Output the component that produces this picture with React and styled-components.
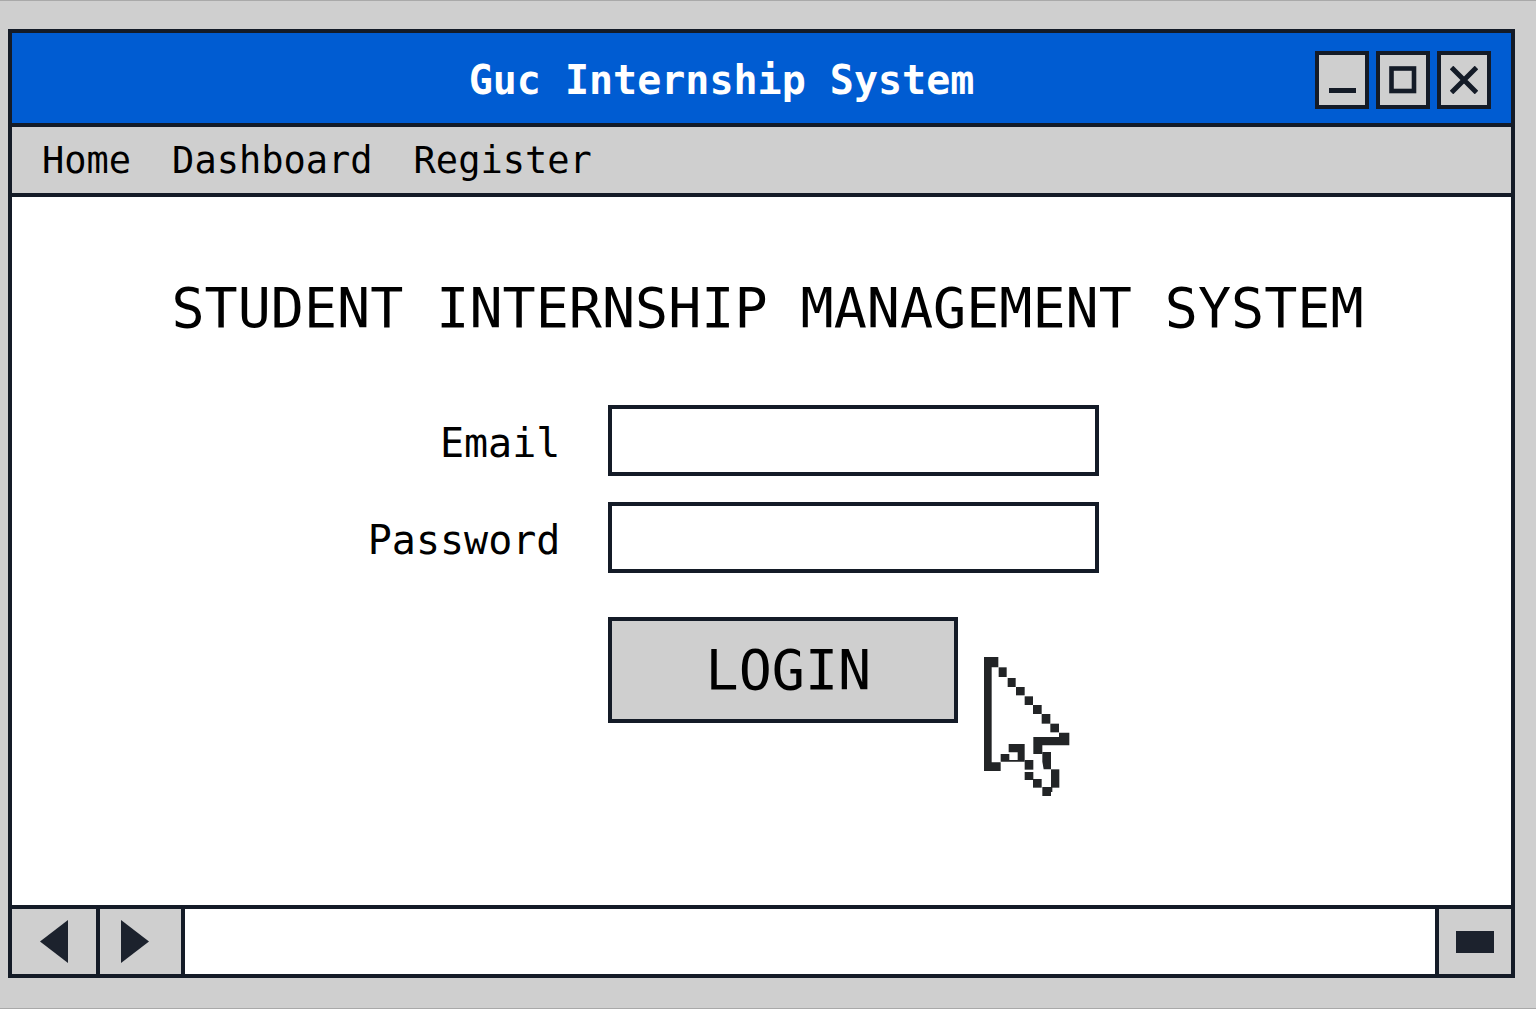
import React from "react";
import styled, { createGlobalStyle } from "styled-components";

const ink = "#141b27";
const grey = "#cfcfcf";
const blue = "#005cd2";

const GlobalStyle = createGlobalStyle`
  *, *::before, *::after { box-sizing: border-box; }
  body {
    margin: 0;
    background: #fff;
    color: #000;
    font-family: "DejaVu Sans Mono", "Liberation Mono", monospace;
  }
  button, input { font: inherit; color: inherit; margin: 0; border-radius: 0; }
`;

const Desktop = styled.div`
  display: flex;
  flex-direction: column;
  min-height: calc(100vh - 15px);
  padding: 28px 21px 30px 8px;
  background: ${grey};
  border-top: 1px solid #a9a9a9;
  border-bottom: 1px solid #a9a9a9;
`;

const Window = styled.div`
  flex: 1;
  display: flex;
  flex-direction: column;
  border: 4px solid ${ink};
  background: #fff;
`;

const TitleBar = styled.header`
  display: flex;
  align-items: center;
  padding: 18px 20px 14px 116px;
  background: ${blue};
  border-bottom: 4px solid ${ink};
`;

const Title = styled.div`
  flex: 1;
  color: #fff;
  font-size: 40px;
  font-weight: 700;
  line-height: 48px;
  text-align: center;
`;

const Controls = styled.div`
  display: flex;
  gap: 7px;
`;

const ControlButton = styled.button`
  display: grid;
  place-items: center;
  width: 54px;
  height: 58px;
  padding: 0;
  background: ${grey};
  border: 4px solid ${ink};
`;

const Menu = styled.nav`
  display: flex;
  gap: 41px;
  padding: 10px 30px 8px;
  background: ${grey};
  border-bottom: 4px solid ${ink};
`;

const MenuLink = styled.a`
  color: #000;
  font-size: 37px;
  line-height: 48px;
  text-decoration: none;
`;

const Content = styled.main`
  flex: 1;
  padding: 79px 0 64px;
`;

const Heading = styled.h1`
  margin: 0 0 65px;
  padding-left: 12px;
  font-size: 55px;
  font-weight: 400;
  line-height: 64px;
  text-align: center;
`;

const Form = styled.form`
  display: grid;
  grid-template-columns: 11fr 18fr;
  gap: 26px 46px;
  align-items: center;
  padding-right: 2px;
`;

const Label = styled.label`
  padding: 4px 2px 0 0;
  font-size: 40px;
  line-height: 48px;
  text-align: right;
`;

const Field = styled.input`
  width: 100%;
  max-width: 491px;
  height: 71px;
  padding: 0 16px;
  font-size: 37px;
  background: #fff;
  border: 4px solid ${ink};
  outline: none;
`;

const Actions = styled.div`
  grid-column: 2;
  display: flex;
  align-items: flex-start;
  gap: 26px;
  padding-top: 18px;
`;

const LoginButton = styled.button`
  width: 350px;
  height: 106px;
  padding: 0 0 0 10px;
  font-size: 55px;
  line-height: 64px;
  background: ${grey};
  border: 4px solid ${ink};
`;

const Pointer = styled.svg`
  display: block;
  flex: none;
  margin-top: 40px;
`;

const ScrollBar = styled.footer`
  display: flex;
  height: 69px;
  border-top: 4px solid ${ink};
`;

const ScrollButton = styled.button`
  display: flex;
  align-items: center;
  justify-content: center;
  width: ${(p) => p.$width}px;
  padding: 0 ${(p) => p.$inset || 0}px 0 0;
  background: ${grey};
  border: 0 solid ${ink};
  border-${(p) => p.$divider}-width: 4px;
`;

const Track = styled.div`
  flex: 1;
  background: #fff;
`;

const pixels = [
  [87, 82, 24, 29], [114, 114, 24, 27], [139, 141, 26, 25], [165, 169, 25, 26],
  [190, 195, 26, 27], [216, 222, 26, 29], [242, 251, 26, 26],
  [244, 388, 25, 55], [190, 417, 26, 26], [165, 396, 26, 24], [165, 360, 26, 29],
];

const PixelPointer = () => (
  <Pointer width="86" height="140" viewBox="43 51 258 420" fill="#222426" aria-hidden="true">
    <path d="M43 51H86V82H66V367H93V393H43Z" />
    <path d="M268 278H299V316H218V342H191V291H268Z" />
    <path d="M218 336H244V388H222L218 365Z" />
    <path d="M218 441H248V456H244V468H218Z" />
    <path d="M117 312H165V365H93V342H119V360H144V337H117Z" />
    {pixels.map(([x, y, w, h]) => (
      <rect key={`${x}-${y}`} x={x} y={y} width={w} height={h} />
    ))}
  </Pointer>
);

export default function App() {
  return (
    <>
      <GlobalStyle />
      <Desktop>
        <Window>
          <TitleBar>
            <Title>Guc Internship System</Title>
            <Controls>
              <ControlButton type="button" aria-label="Minimize">
                <svg width="28" height="28" viewBox="0 0 28 28">
                  <rect x="1" y="22" width="27" height="5" fill={ink} />
                </svg>
              </ControlButton>
              <ControlButton type="button" aria-label="Maximize">
                <svg width="28" height="28" viewBox="0 0 28 28">
                  <rect x="2.5" y="2.5" width="22.5" height="22.5" fill="none" stroke={ink} strokeWidth="4.6" />
                </svg>
              </ControlButton>
              <ControlButton type="button" aria-label="Close">
                <svg width="28" height="28" viewBox="0 0 28 28">
                  <path d="M1.5 1.5L26.5 26.5M26.5 1.5L1.5 26.5" stroke={ink} strokeWidth="5" />
                </svg>
              </ControlButton>
            </Controls>
          </TitleBar>
          <Menu>
            <MenuLink href="#home">Home</MenuLink>
            <MenuLink href="#dashboard">Dashboard</MenuLink>
            <MenuLink href="#register">Register</MenuLink>
          </Menu>
          <Content>
            <Heading>STUDENT INTERNSHIP MANAGEMENT SYSTEM</Heading>
            <Form onSubmit={(e) => e.preventDefault()}>
              <Label htmlFor="email">Email</Label>
              <Field id="email" type="email" />
              <Label htmlFor="password">Password</Label>
              <Field id="password" type="password" />
              <Actions>
                <LoginButton type="submit">LOGIN</LoginButton>
                <PixelPointer />
              </Actions>
            </Form>
          </Content>
          <ScrollBar>
            <ScrollButton type="button" aria-label="Scroll left" $width={88} $divider="right">
              <svg width="29" height="43" viewBox="0 0 29 43">
                <path d="M0 21.5L28 0V43Z" fill="#1c222d" />
              </svg>
            </ScrollButton>
            <ScrollButton type="button" aria-label="Scroll right" $width={85} $divider="right" $inset={12}>
              <svg width="29" height="43" viewBox="0 0 29 43">
                <path d="M29 21.5L1 0V43Z" fill="#1c222d" />
              </svg>
            </ScrollButton>
            <Track />
            <ScrollButton type="button" aria-label="Scroll handle" $width={76} $divider="left">
              <svg width="38" height="22" viewBox="0 0 38 22">
                <rect width="38" height="22" fill="#1c222d" />
              </svg>
            </ScrollButton>
          </ScrollBar>
        </Window>
      </Desktop>
    </>
  );
}
